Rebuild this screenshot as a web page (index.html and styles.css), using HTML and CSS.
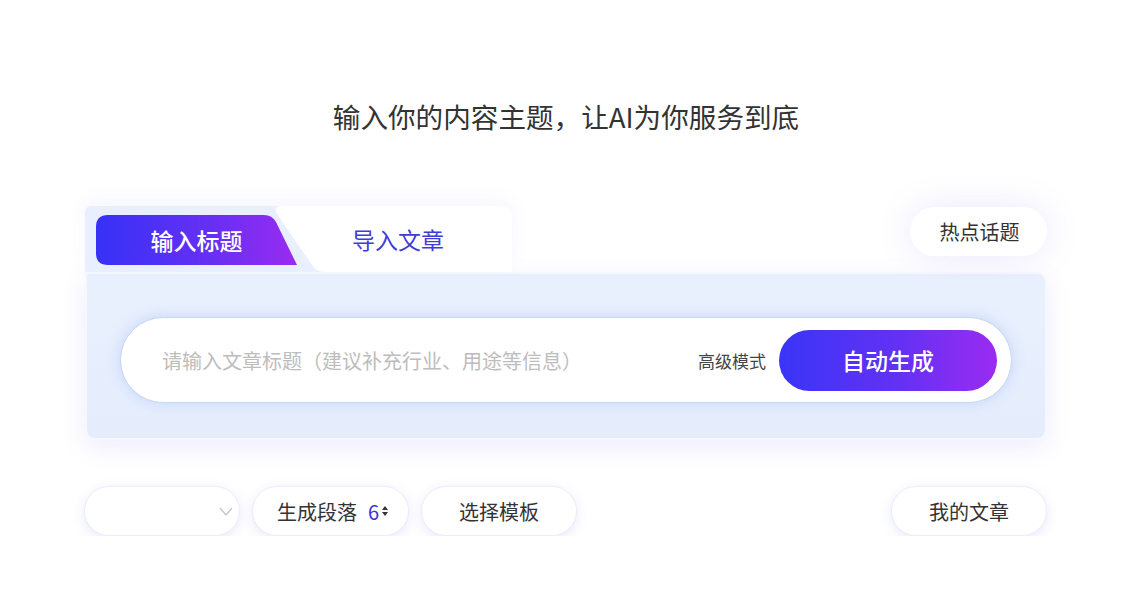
FILE: index.html
```html
<!DOCTYPE html>
<html lang="zh-CN">
<head>
<meta charset="utf-8">
<title>AI 写作</title>
<link rel="stylesheet" href="styles.css">
</head>
<body>
<main class="page">
  <h1 class="headline">输入你的内容主题，让AI为你服务到底</h1>

  <div class="top-row">
    <div class="tabs">
      <div class="tab tab-active">输入标题</div>
      <div class="tab tab-plain">导入文章</div>
    </div>
    <button class="pill hot">热点话题</button>
  </div>

  <section class="panel">
    <div class="input-pill">
      <span class="placeholder">请输入文章标题（建议补充行业、用途等信息）</span>
      <span class="advanced">高级模式</span>
      <button class="generate">自动生成</button>
    </div>
  </section>

  <div class="bottom-row">
    <div class="controls">
      <div class="pill select">
        <svg class="chev" width="14" height="9" viewBox="0 0 14 9"><path d="M1 1 L7 8 L13 1" fill="none" stroke="#c4c4c4" stroke-width="1.3"/></svg>
      </div>
      <div class="pill paras">生成段落<span class="num">6</span><span class="spin"><svg width="6" height="10" viewBox="0 0 6 10"><path d="M0 4 L3 0 L6 4 Z M0 6 L3 10 L6 6 Z" fill="#333"/></svg></span></div>
      <div class="pill">选择模板</div>
    </div>
    <div class="pill">我的文章</div>
  </div>
</main>
</body>
</html>
```

FILE: styles.css
```css
* { box-sizing: border-box; }
html, body { margin: 0; padding: 0; background: #ffffff; }
body {
  font-family: "Noto Sans CJK SC", "Noto Sans", sans-serif;
  color: #333;
}
.page {
  width: 962px;
  margin-left: 85px;
  padding-top: 96px;
}
.headline {
  margin: 0 0 70px;
  text-align: center;
  font-size: 27.6px;
  font-weight: 400;
  line-height: 40px;
  color: #333;
}
.top-row {
  display: flex;
  justify-content: space-between;
  align-items: flex-start;
}
.tabs {
  display: flex;
  width: 427px;
  height: 66px;
  background: #e9effd;
  border-radius: 6px 12px 0 0;
  box-shadow: 0 -6px 18px rgba(120, 110, 240, 0.06);
}
.tab {
  display: flex;
  align-items: center;
  justify-content: center;
  font-size: 23px;
  font-weight: 500;
}
.tab-active {
  width: 201px;
  height: 50px;
  margin: 9px 0 7px 11px;
  color: #fff;
  background: linear-gradient(90deg, #3631f7 0%, #6a2ff3 60%, #9a2bf0 100%);
  clip-path: path("M12 0 H168 Q176 0 180 7 L201 50 H12 Q0 50 0 38 V12 Q0 0 12 0 Z");
}
.tab-plain {
  width: 240px;
  height: 66px;
  margin-left: -25px;
  padding-left: 12px;
  color: #3f3cd6;
  font-weight: 400;
  background: #fff;
  clip-path: path("M10 0 H228 Q240 0 240 12 V66 H52 Q44 66 40 59 L5 8 Q1 0 10 0 Z");
}
.pill {
  display: flex;
  align-items: center;
  justify-content: center;
  width: 156px;
  height: 50px;
  border: 1px solid #ececfb;
  border-radius: 25px;
  background: #fff;
  font-family: inherit;
  font-size: 20px;
  color: #333;
  box-shadow: 0 3px 12px rgba(120, 110, 240, 0.16);
}
.hot {
  width: 137px;
  height: 49px;
  margin-top: 1px;
  padding-left: 8px;
  border: none;
  box-shadow: 0 0 34px rgba(130, 110, 250, 0.16);
  cursor: pointer;
}
.panel {
  height: 168px;
  padding: 43px 33px 35px;
  border: 2px solid #f6f8ff;
  border-radius: 0 10px 10px 10px;
  background: linear-gradient(180deg, #e9f0fd 0%, #e5edfd 100%);
  box-shadow: 0 8px 24px rgba(120, 110, 240, 0.12);
}
.input-pill {
  display: flex;
  align-items: center;
  height: 86px;
  padding: 0 14px 0 41px;
  border: 1px solid #c6d7f4;
  border-radius: 43px;
  background: #fff;
  box-shadow: 0 0 14px rgba(110, 150, 240, 0.28);
}
.placeholder {
  flex: 1;
  font-size: 20px;
  color: #bdbdbd;
}
.advanced {
  font-size: 17px;
  color: #444;
  margin-right: 13px;
}
.generate {
  width: 218px;
  height: 61px;
  border: none;
  border-radius: 31px;
  background: linear-gradient(90deg, #3a35f7 0%, #6331f4 55%, #9b2bf1 100%);
  color: #fff;
  font-family: inherit;
  font-size: 23px;
  font-weight: 500;
  cursor: pointer;
}
.bottom-row {
  display: flex;
  justify-content: space-between;
  margin-top: 46px;
}
.controls {
  display: flex;
  gap: 12px;
  margin-left: -1px;
}
.select {
  justify-content: flex-end;
  padding-right: 6px;
}
.paras {
  width: 157px;
  justify-content: flex-start;
  padding-left: 24px;
}
.num {
  margin-left: 11px;
  color: #3a34d8;
}
.spin {
  display: flex;
  margin-left: 3px;
}
```
